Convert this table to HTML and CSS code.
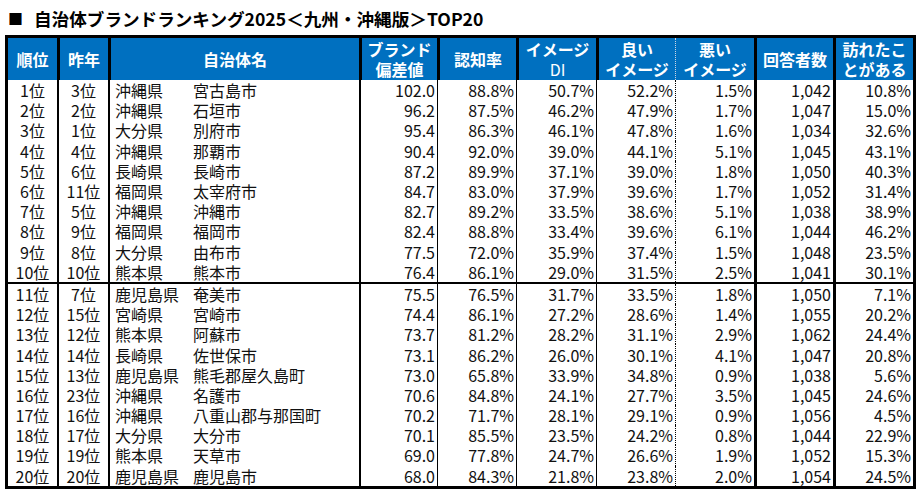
FILE: index.html
```html
<!DOCTYPE html>
<html lang="ja">
<head>
<meta charset="utf-8">
<title>自治体ブランドランキング2025 九州・沖縄版</title>
<link rel="stylesheet" href="styles.css">
</head>
<body>
<div class="page">
  <h1 class="title"><span class="sq">■</span><span>自治体ブランドランキング2025＜九州・沖縄版＞TOP20</span></h1>
  <table class="rank">
    <colgroup>
      <col class="c-rank"><col class="c-prev"><col class="c-name"><col class="c-brand"><col class="c-aware"><col class="c-di"><col class="c-good"><col class="c-bad"><col class="c-resp"><col class="c-visit">
    </colgroup>
    <thead>
      <tr>
        <th>順位</th><th>昨年</th><th>自治体名</th><th><span class="ln">ブランド</span><span class="ln">偏差値</span></th><th>認知率</th><th><span class="ln">イメージ</span><span class="ln di">DI</span></th><th><span class="ln">良い</span><span class="ln">イメージ</span></th><th class="dot"><span class="ln">悪い</span><span class="ln">イメージ</span></th><th>回答者数</th><th><span class="ln">訪れたこ</span><span class="ln">とがある</span></th>
      </tr>
    </thead>
    <tbody>
      <tr><td>1位</td><td>3位</td><td class="nm"><span class="pf">沖縄県</span><span>宮古島市</span></td><td>102.0</td><td>88.8%</td><td>50.7%</td><td>52.2%</td><td>1.5%</td><td>1,042</td><td>10.8%</td></tr>
      <tr><td>2位</td><td>2位</td><td class="nm"><span class="pf">沖縄県</span><span>石垣市</span></td><td>96.2</td><td>87.5%</td><td>46.2%</td><td>47.9%</td><td>1.7%</td><td>1,047</td><td>15.0%</td></tr>
      <tr><td>3位</td><td>1位</td><td class="nm"><span class="pf">大分県</span><span>別府市</span></td><td>95.4</td><td>86.3%</td><td>46.1%</td><td>47.8%</td><td>1.6%</td><td>1,034</td><td>32.6%</td></tr>
      <tr><td>4位</td><td>4位</td><td class="nm"><span class="pf">沖縄県</span><span>那覇市</span></td><td>90.4</td><td>92.0%</td><td>39.0%</td><td>44.1%</td><td>5.1%</td><td>1,045</td><td>43.1%</td></tr>
      <tr><td>5位</td><td>6位</td><td class="nm"><span class="pf">長崎県</span><span>長崎市</span></td><td>87.2</td><td>89.9%</td><td>37.1%</td><td>39.0%</td><td>1.8%</td><td>1,050</td><td>40.3%</td></tr>
      <tr><td>6位</td><td>11位</td><td class="nm"><span class="pf">福岡県</span><span>太宰府市</span></td><td>84.7</td><td>83.0%</td><td>37.9%</td><td>39.6%</td><td>1.7%</td><td>1,052</td><td>31.4%</td></tr>
      <tr><td>7位</td><td>5位</td><td class="nm"><span class="pf">沖縄県</span><span>沖縄市</span></td><td>82.7</td><td>89.2%</td><td>33.5%</td><td>38.6%</td><td>5.1%</td><td>1,038</td><td>38.9%</td></tr>
      <tr><td>8位</td><td>9位</td><td class="nm"><span class="pf">福岡県</span><span>福岡市</span></td><td>82.4</td><td>88.8%</td><td>33.4%</td><td>39.6%</td><td>6.1%</td><td>1,044</td><td>46.2%</td></tr>
      <tr><td>9位</td><td>8位</td><td class="nm"><span class="pf">大分県</span><span>由布市</span></td><td>77.5</td><td>72.0%</td><td>35.9%</td><td>37.4%</td><td>1.5%</td><td>1,048</td><td>23.5%</td></tr>
      <tr><td>10位</td><td>10位</td><td class="nm"><span class="pf">熊本県</span><span>熊本市</span></td><td>76.4</td><td>86.1%</td><td>29.0%</td><td>31.5%</td><td>2.5%</td><td>1,041</td><td>30.1%</td></tr>
      <tr class="sep"><td colspan="10"></td></tr>
      <tr><td>11位</td><td>7位</td><td class="nm"><span class="pf">鹿児島県</span><span>奄美市</span></td><td>75.5</td><td>76.5%</td><td>31.7%</td><td>33.5%</td><td>1.8%</td><td>1,050</td><td>7.1%</td></tr>
      <tr><td>12位</td><td>15位</td><td class="nm"><span class="pf">宮崎県</span><span>宮崎市</span></td><td>74.4</td><td>86.1%</td><td>27.2%</td><td>28.6%</td><td>1.4%</td><td>1,055</td><td>20.2%</td></tr>
      <tr><td>13位</td><td>12位</td><td class="nm"><span class="pf">熊本県</span><span>阿蘇市</span></td><td>73.7</td><td>81.2%</td><td>28.2%</td><td>31.1%</td><td>2.9%</td><td>1,062</td><td>24.4%</td></tr>
      <tr><td>14位</td><td>14位</td><td class="nm"><span class="pf">長崎県</span><span>佐世保市</span></td><td>73.1</td><td>86.2%</td><td>26.0%</td><td>30.1%</td><td>4.1%</td><td>1,047</td><td>20.8%</td></tr>
      <tr><td>15位</td><td>13位</td><td class="nm"><span class="pf">鹿児島県</span><span>熊毛郡屋久島町</span></td><td>73.0</td><td>65.8%</td><td>33.9%</td><td>34.8%</td><td>0.9%</td><td>1,038</td><td>5.6%</td></tr>
      <tr><td>16位</td><td>23位</td><td class="nm"><span class="pf">沖縄県</span><span>名護市</span></td><td>70.6</td><td>84.8%</td><td>24.1%</td><td>27.7%</td><td>3.5%</td><td>1,045</td><td>24.6%</td></tr>
      <tr><td>17位</td><td>16位</td><td class="nm"><span class="pf">沖縄県</span><span>八重山郡与那国町</span></td><td>70.2</td><td>71.7%</td><td>28.1%</td><td>29.1%</td><td>0.9%</td><td>1,056</td><td>4.5%</td></tr>
      <tr><td>18位</td><td>17位</td><td class="nm"><span class="pf">大分県</span><span>大分市</span></td><td>70.1</td><td>85.5%</td><td>23.5%</td><td>24.2%</td><td>0.8%</td><td>1,044</td><td>22.9%</td></tr>
      <tr><td>19位</td><td>19位</td><td class="nm"><span class="pf">熊本県</span><span>天草市</span></td><td>69.0</td><td>77.8%</td><td>24.7%</td><td>26.6%</td><td>1.9%</td><td>1,052</td><td>15.3%</td></tr>
      <tr><td>20位</td><td>20位</td><td class="nm"><span class="pf">鹿児島県</span><span>鹿児島市</span></td><td>68.0</td><td>84.3%</td><td>21.8%</td><td>23.8%</td><td>2.0%</td><td>1,054</td><td>24.5%</td></tr>
    </tbody>
  </table>
</div>
</body>
</html>
```

FILE: styles.css
```css
html, body {
  margin: 0;
  padding: 0;
  background: #ffffff;
}

.page {
  padding: 6px 0 0 5px;
  font-family: "Liberation Sans Narrow", "Noto Sans CJK JP", sans-serif;
  color: #111;
}

.title {
  display: flex;
  align-items: center;
  gap: 11px;
  margin: 0 0 4px 3px;
  height: 25px;
  font-family: "Noto Sans CJK JP", sans-serif;
  font-weight: 700;
  font-size: 17.6px;
  line-height: 25px;
  color: #000;
}

.title .sq {
  font-size: 15px;
}

.rank {
  border-collapse: separate;
  border-spacing: 0;
  table-layout: fixed;
  width: 908px;
  border: 3px solid #000;
}

.c-rank { width: 49px; }
.c-prev { width: 51px; }
.c-name { width: 251px; }
.c-brand { width: 78px; }
.c-aware { width: 79px; }
.c-di { width: 80px; }
.c-good { width: 79px; }
.c-bad { width: 79px; }
.c-resp { width: 79px; }
.c-visit { width: 80px; }

.rank th {
  height: 42px;
  padding: 0;
  background: #0070c0;
  color: #fff;
  font-family: "Noto Sans CJK JP", sans-serif;
  font-weight: 700;
  font-size: 16px;
  line-height: 20px;
  text-align: center;
  vertical-align: middle;
  border-left: 3px solid #000;
}

.rank th .ln {
  display: block;
  height: 20px;
}

.rank th:first-child {
  border-left: none;
}

.rank th.dot {
  border-left: 1px dotted #cfd8e6;
}

.rank th .di {
  font-weight: 400;
}

.rank td {
  height: 20.2px;
  padding: 0 2px 0 0;
  font-size: 16px;
  line-height: 20px;
  text-align: right;
  white-space: nowrap;
  vertical-align: middle;
  border-left: 1px solid #000;
}

.rank td:first-child {
  border-left: none;
  text-align: center;
  padding: 0;
}

.rank td:nth-child(2) {
  border-left-width: 2px;
  text-align: center;
  padding: 0;
}

.rank td:nth-child(3) {
  border-left-width: 2px;
}

.rank td:nth-child(4) {
  border-left-width: 2px;
}

.rank td:nth-child(8) {
  border-left-style: dotted;
}

.rank td:nth-child(9),
.rank td:nth-child(10) {
  border-left-width: 3px;
}

.rank td.nm {
  text-align: left;
  padding: 0 0 0 5px;
}

.nm .pf {
  display: inline-block;
  width: 78px;
}

.rank tr.sep td {
  height: 2px;
  padding: 0;
  border: none;
  background: #000;
  font-size: 0;
  line-height: 0;
}
```
